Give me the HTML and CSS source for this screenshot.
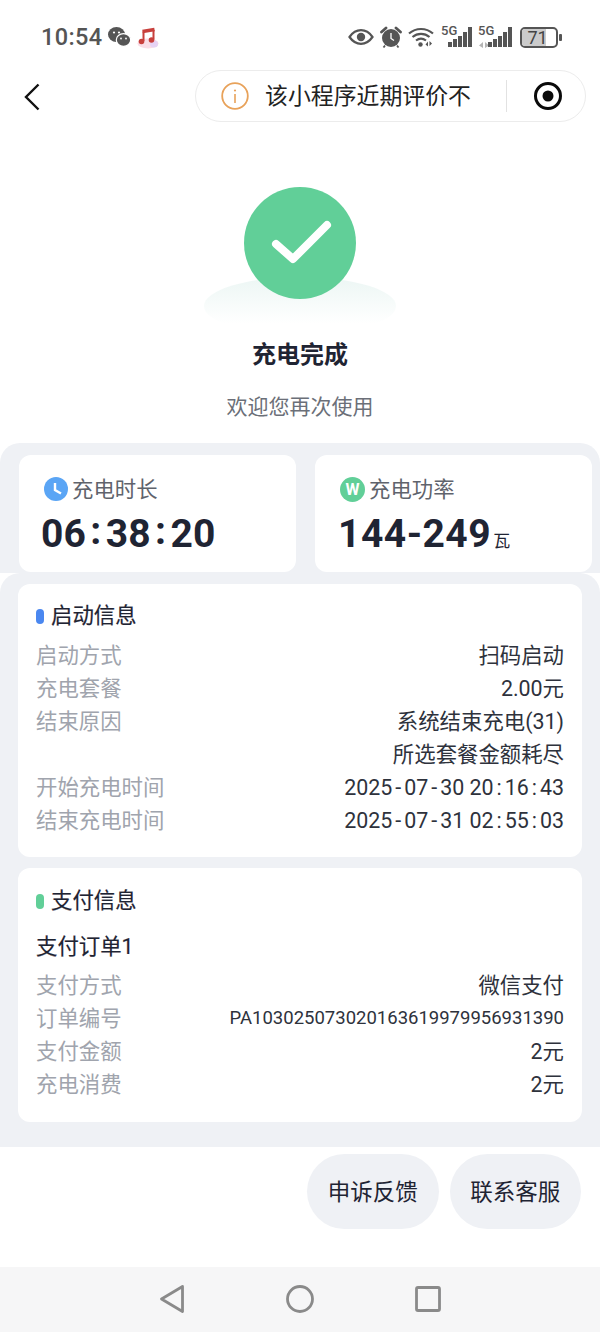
FILE: index.html
```html
<!DOCTYPE html>
<html lang="zh-CN">
<head>
    <meta charset="UTF-8">
    <meta name="viewport" content="width=device-width, initial-scale=1.0">
    <title>充电完成</title>
    <link rel="stylesheet" href="styles.css">
</head>
<body>
    <div class="page">
        <div class="status-bar">
            <div class="status-left">
                <span class="status-time">10:54</span>
                <svg class="icon-wechat" width="23" height="20" viewBox="0 0 23 20">
                    <ellipse cx="8.500" cy="7.500" rx="8.500" ry="7.500" fill="#555"/>
                    <ellipse cx="15.500" cy="13" rx="7.200" ry="6.300" fill="#555" stroke="#fff" stroke-width="1.200"/>
                    <circle cx="6" cy="5.500" r="1.100" fill="#fff"/>
                    <circle cx="11" cy="5.500" r="1.100" fill="#fff"/>
                    <circle cx="13" cy="11.500" r="0.900" fill="#fff"/>
                    <circle cx="18" cy="11.500" r="0.900" fill="#fff"/>
                </svg>
                <svg class="icon-music" width="24" height="24" viewBox="0 0 24 24">
                    <ellipse cx="12" cy="18.500" rx="10.500" ry="5" fill="#f9dde6"/>
                    <ellipse cx="18" cy="19" rx="4" ry="3.500" fill="#e6d3f5"/>
                    <path d="M7.500 16V6.500M17.500 14.500V5" fill="none" stroke="#c8403c" stroke-width="2"/>
                    <path d="M6.500 6.500L18.500 4.500" fill="none" stroke="#c8403c" stroke-width="3.600"/>
                    <circle cx="5.500" cy="16.500" r="2.800" fill="#c8403c"/>
                    <circle cx="15.500" cy="15" r="2.800" fill="#c8403c"/>
                </svg>
            </div>
            <div class="status-right">
                <svg width="26" height="16" viewBox="0 0 26 16">
                    <path d="M1.500 8C5 3 9 1.200 13 1.200S21 3 24.500 8C21 13 17 14.800 13 14.800S5 13 1.500 8Z" fill="none" stroke="#555" stroke-width="2.200"/>
                    <circle cx="13" cy="8" r="4.200" fill="#555"/>
                </svg>
                <svg width="22" height="22" viewBox="0 0 22 22">
                    <circle cx="11" cy="12" r="9" fill="#555"/>
                    <path d="M11 7v5.500l3 2" fill="none" stroke="#fff" stroke-width="1.300"/>
                    <path d="M1.500 6L6 2M20.500 6L16 2" stroke="#555" stroke-width="2.800" stroke-linecap="round"/>
                    <path d="M5 19.500l-1.500 2M17 19.500l1.500 2" stroke="#555" stroke-width="1.800"/>
                </svg>
                <svg width="27" height="20" viewBox="0 0 27 20">
                    <path d="M1 6.500C8 .5 18 .5 25 6.500M4.500 10C9.500 5.800 16.500 5.800 21.500 10M8 13.500c3-2.300 7-2.300 10 0" fill="none" stroke="#555" stroke-width="2.200"/>
                    <circle cx="12.500" cy="17.500" r="2.200" fill="#555"/>
                    <path d="M20 19.500v-5l-2.500 3zM21.500 14v5l2.500-2.500z" fill="#555"/>
                </svg>
                <div class="signal signal-first">
                    <span class="signal-label">5G</span>
                    <div class="bars">
                        <i class="bar-1"></i><i class="bar-2"></i><i class="bar-3"></i><i class="bar-4"></i><i class="bar-5"></i>
                    </div>
                </div>
                <div class="signal signal-second">
                    <span class="signal-label">5G</span>
                    <svg class="signal-arrows" width="10" height="6" viewBox="0 0 10 6">
                        <path d="M4 6V0L0 3.500zM6 0v6l4-2.500z" fill="#b5b5b5"/>
                    </svg>
                    <div class="bars">
                        <i class="bar-1"></i><i class="bar-2"></i><i class="bar-3"></i><i class="bar-4"></i><i class="bar-5"></i>
                    </div>
                </div>
                <div class="battery">
                    <div class="battery-body">
                        <div class="battery-fill"></div>
                        <span class="battery-text">71</span>
                    </div>
                    <div class="battery-tip"></div>
                </div>
            </div>
        </div>

        <div class="nav-bar">
            <svg class="nav-back" width="16" height="28" viewBox="0 0 16 28">
                <path d="M14.500 1.500L2 14l12.500 12.500" fill="none" stroke="#111" stroke-width="2.400"/>
            </svg>
            <div class="capsule">
                <svg width="28" height="28" viewBox="0 0 28 28">
                    <circle cx="14" cy="14" r="12.800" fill="none" stroke="#e8a25a" stroke-width="1.800"/>
                    <path d="M14 12v9" stroke="#e8a25a" stroke-width="1.600"/>
                    <circle cx="14" cy="8.500" r="1.100" fill="#e8a25a"/>
                </svg>
                <span class="capsule-text">该小程序近期评价不</span>
                <div class="capsule-line"></div>
                <svg width="30" height="30" viewBox="0 0 30 30">
                    <circle cx="15" cy="15" r="12.500" fill="none" stroke="#0a0a0a" stroke-width="3"/>
                    <circle cx="15" cy="15" r="5.500" fill="#0a0a0a"/>
                </svg>
            </div>
        </div>

        <div class="hero">
            <div class="hero-mark">
                <div class="hero-shadow"></div>
                <div class="hero-circle">
                    <svg width="64" height="50" viewBox="0 0 64 50">
                        <path d="M8 26l17 15L59 7" fill="none" stroke="#fff" stroke-width="8" stroke-linecap="round" stroke-linejoin="round"/>
                    </svg>
                </div>
            </div>
            <div class="hero-title">充电完成</div>
            <div class="hero-sub">欢迎您再次使用</div>
        </div>

        <div class="stats-panel">
            <div class="stat-card">
                <div class="stat-label">
                    <svg width="24" height="24" viewBox="0 0 24 24">
                        <circle cx="12" cy="12" r="12" fill="#5aa5f5"/>
                        <path d="M11 6v7l6 3.500" fill="none" stroke="#fff" stroke-width="2.400"/>
                    </svg>
                    <span>充电时长</span>
                </div>
                <div class="stat-value">06<span class="colon">:</span>38<span class="colon">:</span>20</div>
            </div>
            <div class="stat-card">
                <div class="stat-label">
                    <div class="watt-badge">W</div>
                    <span>充电功率</span>
                </div>
                <div class="stat-value stat-power">144-249<span class="stat-unit">瓦</span></div>
            </div>
        </div>

        <div class="detail-panel">
            <div class="info-card info-start">
                <div class="info-title"><i class="dot dot-blue"></i>启动信息</div>
                <div class="info-row"><span class="row-key">启动方式</span><span class="row-val">扫码启动</span></div>
                <div class="info-row"><span class="row-key">充电套餐</span><span class="row-val">2.00元</span></div>
                <div class="info-row"><span class="row-key">结束原因</span><span class="row-val">系统结束充电(31)<br>所选套餐金额耗尽</span></div>
                <div class="info-row"><span class="row-key">开始充电时间</span><span class="row-val">2025<span class="sep">-</span>07<span class="sep">-</span>30 20<span class="sep">:</span>16<span class="sep">:</span>43</span></div>
                <div class="info-row"><span class="row-key">结束充电时间</span><span class="row-val">2025<span class="sep">-</span>07<span class="sep">-</span>31 02<span class="sep">:</span>55<span class="sep">:</span>03</span></div>
            </div>
            <div class="info-card info-pay">
                <div class="info-title"><i class="dot dot-green"></i>支付信息</div>
                <div class="order-title">支付订单1</div>
                <div class="info-row"><span class="row-key">支付方式</span><span class="row-val">微信支付</span></div>
                <div class="info-row"><span class="row-key">订单编号</span><span class="row-val row-small">PA103025073020163619979956931390</span></div>
                <div class="info-row"><span class="row-key">支付金额</span><span class="row-val">2元</span></div>
                <div class="info-row"><span class="row-key">充电消费</span><span class="row-val">2元</span></div>
            </div>
        </div>

        <div class="footer">
            <button class="footer-btn" type="button">申诉反馈</button>
            <button class="footer-btn" type="button">联系客服</button>
        </div>

        <div class="system-nav">
            <svg width="26" height="30" viewBox="0 0 26 30">
                <path d="M23.500 2.500L2.500 15l21 12.500Z" fill="none" stroke="#8a8a8a" stroke-width="2.800" stroke-linejoin="round"/>
            </svg>
            <svg width="28" height="28" viewBox="0 0 28 28">
                <circle cx="14" cy="14" r="12.500" fill="none" stroke="#8a8a8a" stroke-width="2.800"/>
            </svg>
            <svg width="26" height="26" viewBox="0 0 26 26">
                <rect x="1.500" y="1.500" width="23" height="23" rx="1.500" fill="none" stroke="#8a8a8a" stroke-width="2.800"/>
            </svg>
        </div>
    </div>
</body>
</html>
```

FILE: styles.css
```css
* {
    box-sizing: border-box;
}
body {
    margin: 0;
    padding: 0;
    background-color: #fff;
    font-family: Roboto, "Noto Sans CJK SC", sans-serif;
    color: #1f2433;
}
.page {
    width: 600px;
    height: 1332px;
    display: flex;
    flex-direction: column;
    overflow: hidden;
}

/* status bar */
.status-bar {
    height: 70px;
    padding: 20px 38px 0 41px;
    display: flex;
    justify-content: space-between;
    align-items: flex-start;
}
.status-left {
    display: flex;
    align-items: center;
}
.status-time {
    font-family: Roboto, sans-serif;
    font-weight: 500;
    font-size: 23.500px;
    line-height: 34px;
    letter-spacing: 0.400px;
    color: #555;
}
.icon-wechat {
    margin-left: 5px;
    margin-top: -1px;
}
.icon-music {
    margin-left: 5px;
}
.status-right {
    display: flex;
    align-items: center;
    gap: 6px;
    height: 34px;
}
.signal {
    position: relative;
    height: 22px;
}
.signal-first {
    width: 31px;
}
.signal-second {
    width: 34px;
}
.signal-label {
    position: absolute;
    left: 0;
    top: -1px;
    font-family: Roboto, sans-serif;
    font-size: 13px;
    font-weight: 500;
    line-height: 12px;
    color: #555;
}
.signal-arrows {
    position: absolute;
    left: 1px;
    bottom: 0;
}
.bars {
    position: absolute;
    right: 0;
    bottom: 1px;
    display: flex;
    align-items: flex-end;
    gap: 1.500px;
}
.bars i {
    display: block;
    width: 3.600px;
    background-color: #555;
}
.bars .bar-1 { height: 5px; }
.bars .bar-2 { height: 8px; }
.bars .bar-3 { height: 11px; }
.bars .bar-4 { height: 15px; }
.bars .bar-5 { height: 20px; }
.battery {
    display: flex;
    align-items: center;
    gap: 1px;
    margin-left: 2px;
}
.battery-body {
    position: relative;
    width: 38px;
    height: 21px;
    border: 2px solid #555;
    border-radius: 5px;
    overflow: hidden;
}
.battery-fill {
    width: 71%;
    height: 100%;
    background-color: #cbcbcb;
}
.battery-text {
    position: absolute;
    left: 0;
    right: 3px;
    top: 0;
    text-align: center;
    font-family: Roboto, sans-serif;
    font-size: 18px;
    line-height: 17px;
    color: #444;
}
.battery-tip {
    width: 3px;
    height: 7px;
    border-radius: 1px;
    background-color: #555;
}

/* mini program nav */
.nav-bar {
    height: 52px;
    padding: 0 14px 0 24px;
    display: flex;
    justify-content: space-between;
    align-items: center;
}
.nav-back {
    margin-top: 2px;
}
.capsule {
    width: 391px;
    height: 52px;
    padding: 0 22px 0 25px;
    display: flex;
    align-items: center;
    border: 1px solid #ececec;
    border-radius: 26px;
    background-color: #fff;
}
.capsule-text {
    margin-left: 16px;
    padding-top: 2px;
    font-size: 22.900px;
    line-height: 30px;
    color: #222;
    white-space: nowrap;
}
.capsule-line {
    width: 1px;
    height: 32px;
    margin-left: 35px;
    margin-right: 26px;
    background-color: #e2e2e2;
}

/* result */
.hero {
    height: 321px;
    padding-top: 65px;
    display: flex;
    flex-direction: column;
    align-items: center;
}
.hero-mark {
    position: relative;
    width: 192px;
    height: 148px;
    display: flex;
    justify-content: center;
}
.hero-shadow {
    position: absolute;
    left: 0;
    bottom: 0;
    width: 192px;
    height: 58px;
    border-radius: 50%;
    background: linear-gradient(#ecf6f4, #fff 80%);
}
.hero-circle {
    position: relative;
    width: 112px;
    height: 112px;
    display: flex;
    justify-content: center;
    align-items: center;
    border-radius: 50%;
    background-color: #61cf98;
}
.hero-title {
    margin-top: 3px;
    font-size: 24px;
    font-weight: 700;
    line-height: 34px;
    color: #1f2433;
}
.hero-sub {
    margin-top: 20px;
    font-size: 21px;
    line-height: 30px;
    color: #6b6f78;
}

/* duration and power */
.stats-panel {
    height: 130px;
    padding: 12px 8px 0 19px;
    display: flex;
    gap: 19px;
    border-radius: 20px 20px 0 0;
    background-color: #eff1f5;
}
.stat-card {
    width: 277px;
    height: 117px;
    padding: 19px 0 0 24px;
    border-radius: 12px;
    background-color: #fff;
}
.stat-label {
    display: flex;
    align-items: center;
    gap: 4px;
    height: 32px;
    margin-left: 1px;
    font-size: 21.400px;
    line-height: 32px;
    color: #5f636c;
}
.stat-label svg, .watt-badge {
    margin-top: -2px;
}
.watt-badge {
    width: 25px;
    height: 25px;
    border-radius: 50%;
    background-color: #61cf98;
    color: #fff;
    font-family: Roboto, sans-serif;
    font-size: 16px;
    font-weight: 700;
    line-height: 25px;
    text-align: center;
}
.stat-value {
    margin-top: 3px;
    margin-left: -2px;
    font-family: Roboto, sans-serif;
    font-size: 39px;
    font-weight: 700;
    line-height: 50px;
    color: #1f2433;
    white-space: nowrap;
}
.colon {
    position: relative;
    top: -3px;
    margin: 0 4.500px;
}
.stat-power {
    margin-left: -1px;
    letter-spacing: 0.500px;
}
.stat-unit {
    margin-left: 2px;
    font-family: "Noto Sans CJK SC", sans-serif;
    font-size: 17px;
    font-weight: 400;
    letter-spacing: 0;
}

/* details */
.detail-panel {
    height: 574px;
    padding: 11px 18px 0;
    border-radius: 20px 20px 0 0;
    background-color: #eff1f5;
}
.info-card {
    padding: 15px 18px 0;
    border-radius: 12px;
    background-color: #fff;
}
.info-start {
    height: 273px;
}
.info-pay {
    height: 254px;
    margin-top: 11px;
    padding-top: 16px;
}
.info-title {
    display: flex;
    align-items: center;
    gap: 7px;
    height: 34px;
    font-size: 21.400px;
    line-height: 34px;
    -webkit-text-stroke: 0.200px #1f2433;
    color: #1f2433;
}
.dot {
    display: block;
    width: 8px;
    height: 15px;
    border-radius: 4px;
}
.dot-blue {
    background-color: #4a87f0;
}
.dot-green {
    background-color: #61cf98;
}
.order-title {
    margin-top: 12px;
    font-size: 21.400px;
    line-height: 33px;
    -webkit-text-stroke: 0.200px #1f2433;
    color: #1f2433;
}
.info-row {
    display: flex;
    justify-content: space-between;
    font-size: 21.400px;
    line-height: 33px;
}
.info-start .info-title + .info-row {
    margin-top: 6px;
}
.info-pay .order-title + .info-row {
    margin-top: 6px;
}
.row-key {
    color: #a0a4ad;
}
.row-val {
    color: #2e323c;
    text-align: right;
}
.row-small {
    font-size: 18.500px;
}
.sep {
    margin: 0 3px;
}

/* bottom buttons */
.footer {
    height: 120px;
    padding: 7px 19px 0 0;
    display: flex;
    justify-content: flex-end;
    align-items: flex-start;
    gap: 11px;
}
.footer-btn {
    width: 131.500px;
    height: 75px;
    padding: 0 0 4px;
    border: none;
    border-radius: 38px;
    background-color: #eff1f5;
    color: #1f2433;
    font-family: "Noto Sans CJK SC", sans-serif;
    font-size: 22.500px;
}

/* android nav */
.system-nav {
    flex: 1;
    padding: 0 159px 2px;
    display: flex;
    justify-content: space-between;
    align-items: center;
    background-color: #f6f6f7;
}
```
